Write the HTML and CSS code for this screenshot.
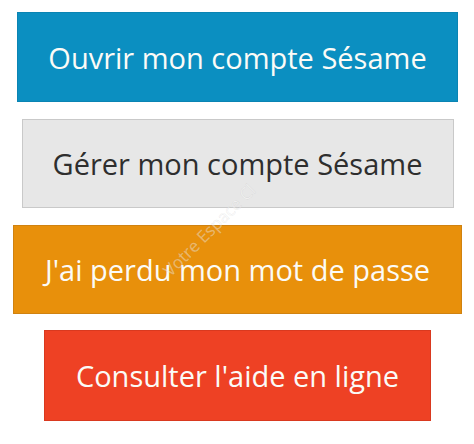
FILE: index.html
```html
<!DOCTYPE html>
<html lang="fr">
<head>
<meta charset="utf-8">
<title>Sésame</title>
<link rel="stylesheet" href="styles.css">
</head>
<body>
<main class="stack">
  <a class="btn btn-blue" href="#">Ouvrir mon compte Sésame</a>
  <a class="btn btn-grey" href="#">Gérer mon compte Sésame</a>
  <a class="btn btn-orange" href="#">J'ai perdu mon mot de passe</a>
  <a class="btn btn-red" href="#">Consulter l'aide en ligne</a>
  <span class="watermark">Votre Espace Cl</span>
</main>
</body>
</html>
```
FILE: styles.css
```css
html, body {
  margin: 0;
  padding: 0;
  background: #ffffff;
}
body {
  width: 474px;
  height: 444px;
  overflow: hidden;
  font-family: "Open Sans", "DejaVu Sans", sans-serif;
}
.stack {
  position: relative;
  display: flex;
  flex-direction: column;
  align-items: center;
  padding-top: 12px;
  padding-left: 1px;
}
.btn {
  box-sizing: border-box;
  display: flex;
  align-items: center;
  justify-content: center;
  text-decoration: none;
  font-size: 29px;
  line-height: 1;
  color: #fbfbf7;
  border: 1px solid transparent;
}
.btn-blue {
  width: 441px;
  height: 90px;
  background: #0b8fc1;
  border-color: #0a84b3;
}
.btn-grey {
  width: 432px;
  height: 89px;
  margin-top: 17px;
  background: #e7e7e7;
  border-color: #c9c9c9;
  color: #2e2e2e;
}
.btn-orange {
  width: 449px;
  height: 89px;
  margin-top: 17px;
  background: #e8900b;
  border-color: #d08210;
}
.btn-red {
  width: 387px;
  height: 91px;
  margin-top: 16px;
  background: #ee4124;
  border-color: #d9391f;
}
.watermark {
  position: absolute;
  left: 172px;
  top: 262px;
  font-size: 17px;
  line-height: 1;
  color: rgba(255, 255, 255, 0.4);
  -webkit-text-stroke: 0.4px rgba(150, 150, 150, 0.25);
  transform: rotate(-45deg);
  transform-origin: 0 100%;
  white-space: nowrap;
  pointer-events: none;
}
```
